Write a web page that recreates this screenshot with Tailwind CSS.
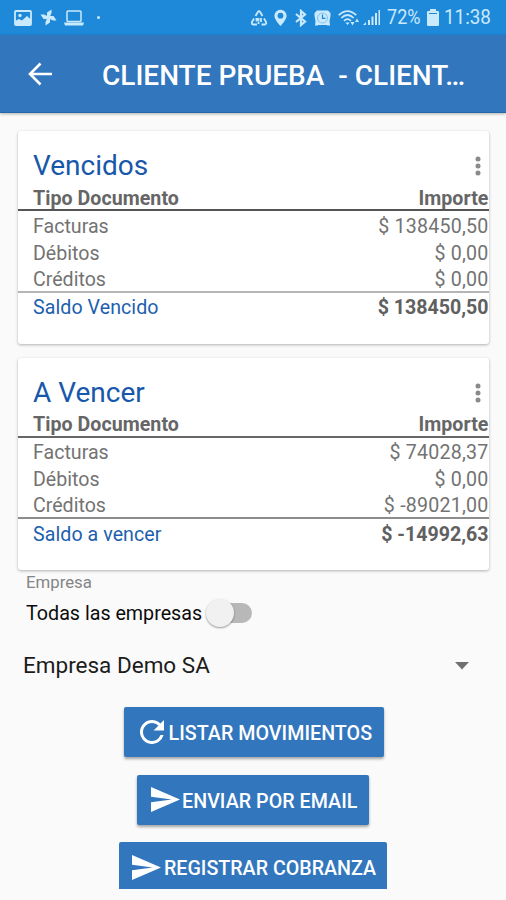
<!DOCTYPE html>
<html lang="es">
<head>
<meta charset="utf-8">
<title>Cliente</title>
<script src="https://cdn.jsdelivr.net/npm/@tailwindcss/browser@4"></script>
</head>
<body class="w-[506px] h-[900px] overflow-hidden bg-[#fafafa] font-[Roboto,sans-serif] text-[19.6px] text-[#737373]">
<div class="flex flex-col h-[900px]">
  <div class="h-[35px] bg-[#1e88d9] flex items-center justify-between text-[#c9eafc] pl-[14px] pr-[15px] shrink-0">
    <div class="flex items-center">
      <svg class="w-[18px] h-[16px]" viewBox="0 0 18 16"><rect x="1" y="1" width="16" height="14" rx="1" fill="none" stroke="currentColor" stroke-width="1.8"/><circle cx="6" cy="5.5" r="1.7" fill="currentColor"/><path d="M1 11l4-2 3 1.500 5-4.500 4 3.500V15H1z" fill="currentColor"/></svg>
      <svg class="w-[17px] h-[17px] ml-[8px]" viewBox="0 0 17 17" fill="currentColor"><path d="M7 8.500V3.500L11.500 .5V4L9.500 8.500z"/><path d="M7 8.500V3.500L11.500 .5V4L9.500 8.500z" transform="rotate(90 8.500 8.500)"/><path d="M7 8.500V3.500L11.500 .5V4L9.500 8.500z" transform="rotate(180 8.500 8.500)"/><path d="M7 8.500V3.500L11.500 .5V4L9.500 8.500z" transform="rotate(270 8.500 8.500)"/></svg>
      <svg class="w-[20px] h-[16px] ml-[7px]" viewBox="0 0 20 16"><rect x="3" y="1" width="14" height="10.500" rx="1" fill="none" stroke="currentColor" stroke-width="1.500"/><path d="M0 12.500h20l-1 3H1z" fill="currentColor"/></svg>
      <span class="w-[3px] h-[3px] rounded-full bg-[#c9eafc] ml-[13px]"></span>
    </div>
    <div class="flex items-center">
      <svg class="w-[18px] h-[16px]" viewBox="0 0 18 16" fill="none" stroke="currentColor" stroke-width="1.800"><path d="M5.500 6l2.300-4q1.200-1.500 2.400 0l2.300 4M14 8.500l2.200 3.800q.3 2-1.500 2.200H11.500M7 14.500H3.300q-1.800-.3-1.500-2.200L4 8.500M6.500 11.500v-2.500h2v2.500M11 8v4M8.500 12v2"/></svg>
      <svg class="w-[13px] h-[18px] ml-[6px]" viewBox="0 0 13 18"><path fill="currentColor" fill-rule="evenodd" d="M6.500 .8A6 6 0 0 0 .4 6.800C.4 11 6.500 17 6.500 17s6.100-6 6.100-10.200A6 6 0 0 0 6.500 .8zm0 3a2.900 2.900 0 1 1 0 5.800 2.900 2.900 0 0 1 0-5.800z"/></svg>
      <svg class="w-[12px] h-[18px] ml-[8px]" viewBox="0 0 12 18" fill="none" stroke="currentColor" stroke-width="2.200"><path d="M1 5l9 7.500-4 3.500V2l4 3.500L1 13"/></svg>
      <svg class="w-[17px] h-[18px] ml-[7px]" viewBox="0 0 17 18"><path d="M.5 4L3 1.500h11L16.500 4v3l-1 5 .5 4.500h-2.500L12.500 16h-8l-1 .5H1L1.500 12 .5 7z" fill="currentColor"/><circle cx="8.500" cy="9" r="5" fill="none" stroke="#6bb8ea" stroke-width=".8"/><path d="M8.500 5.500V9.300H11.500" fill="none" stroke="#1e88d9" stroke-width="1.300"/></svg>
      <svg class="w-[22px] h-[18px] ml-[7px]" viewBox="0 0 22 18" fill="none" stroke="currentColor" stroke-width="1.700"><path d="M.7 6.200Q9.500-2 18.300 6.200M3.300 9Q9.500 3 15.700 9M6 11.800Q9.500 8.500 13 11.800"/><path d="M7.500 13.500h4l-2 2.500z" fill="currentColor" stroke="none"/><path d="M12.500 13l2 3.500 2-3.500zM17 13l2-3.500 2 3.500z" fill="currentColor" stroke="none"/></svg>
      <svg class="w-[18px] h-[17px] ml-[3px]" viewBox="0 0 18 17" fill="currentColor"><path d="M0 16l3-3v3zM5 11h2v5H5zM8.500 7.500h2V16h-2zM12 4h2v12h-2zM15.500 1h1.500v15h-1.500z"/></svg>
      <span class="ml-[6px] w-[34px] text-[20.500px] inline-block origin-left scale-x-[0.88] whitespace-nowrap">72%</span>
      <svg class="w-[12px] h-[17px] ml-[6px]" viewBox="0 0 12 17" fill="currentColor"><path d="M3 0h6v2H11q1 0 1 1v13q0 1-1 1H1q-1 0-1-1V3q0-1 1-1h2z"/><path d="M2 4.500h8" stroke="#1e88d9" stroke-width="1"/></svg>
      <span class="ml-[5px] w-[47px] text-[20.500px] inline-block origin-left scale-x-[0.92] whitespace-nowrap">11:38</span>
    </div>
  </div>
  <header class="h-[78px] bg-[#3276bd] border-b border-[#2467a6] shadow-[0_1px_3px_rgba(0,0,0,0.3)] flex items-center text-white shrink-0">
    <svg class="w-[24px] h-[24px] ml-[28px]" viewBox="0 0 24 24" fill="none" stroke="currentColor" stroke-width="2.600"><path d="M12.500 1.500L2 12l10.500 10.500M2 12h22"/></svg>
    <h1 class="ml-[50px] pt-[4px] text-[28px] font-medium whitespace-pre">CLIENTE PRUEBA  - CLIENT…</h1>
  </header>
  <main class="flex flex-col">
    <section class="mt-[18px] ml-[18px] w-[471px] h-[213px] pr-[0.500px] bg-white rounded-[3px] shadow-[0_1px_3px_rgba(0,0,0,0.300)]">
      <div class="pt-[17px] pl-[15px] pr-[8px] flex items-center justify-between h-[53px]"><h2 class="text-[28px] leading-[36px] text-[#1758ab]">Vencidos</h2>
        <svg class="w-[6px] h-[20px]" viewBox="0 0 6 20" fill="#8a8a8a"><circle cx="3" cy="3" r="2.500"/><circle cx="3" cy="10" r="2.500"/><circle cx="3" cy="17" r="2.500"/></svg></div>
      <div class="h-[27px] pl-[15px] flex justify-between leading-[29px] tracking-[0.050px] font-bold text-[#666] border-b-2 border-[#555]"><span>Tipo Documento</span><span>Importe</span></div>
      <div class="h-[82px] pt-[3px] pl-[15px] leading-[26.700px] border-b-2 border-[#b5b5b5]">
        <div class="flex justify-between"><span>Facturas</span><span class="tracking-[0.220px]">$ 138450,50</span></div>
        <div class="flex justify-between"><span>Débitos</span><span class="tracking-[0.220px]">$ 0,00</span></div>
        <div class="flex justify-between"><span>Créditos</span><span class="tracking-[0.220px]">$ 0,00</span></div>
      </div>
      <div class="pl-[15px] pt-[1px] flex justify-between leading-[28px]"><span class="text-[#1d5fae] tracking-[0.070px]">Saldo Vencido</span><span class="font-bold text-[#606060]">$ 138450,50</span></div>
    </section>
    <section class="mt-[14px] ml-[18px] w-[471px] h-[212px] pr-[0.500px] bg-white rounded-[3px] shadow-[0_1px_3px_rgba(0,0,0,0.300)]">
      <div class="pt-[17px] pl-[15px] pr-[8px] flex items-center justify-between h-[53px]"><h2 class="text-[28px] leading-[36px] text-[#1758ab]">A Vencer</h2>
        <svg class="w-[6px] h-[20px]" viewBox="0 0 6 20" fill="#8a8a8a"><circle cx="3" cy="3" r="2.500"/><circle cx="3" cy="10" r="2.500"/><circle cx="3" cy="17" r="2.500"/></svg></div>
      <div class="h-[27px] pl-[15px] flex justify-between leading-[28px] tracking-[0.050px] font-bold text-[#666] border-b-2 border-[#666]"><span>Tipo Documento</span><span>Importe</span></div>
      <div class="h-[81px] pt-[2px] pl-[15px] leading-[26.700px] border-b-2 border-[#8d8d8d]">
        <div class="flex justify-between"><span>Facturas</span><span class="tracking-[0.220px]">$ 74028,37</span></div>
        <div class="flex justify-between"><span>Débitos</span><span class="tracking-[0.220px]">$ 0,00</span></div>
        <div class="flex justify-between"><span>Créditos</span><span class="tracking-[0.220px]">$ -89021,00</span></div>
      </div>
      <div class="pl-[15px] pt-[1px] flex justify-between leading-[29px]"><span class="text-[#1d5fae] tracking-[0.070px]">Saldo a vencer</span><span class="font-bold text-[#606060]">$ -14992,63</span></div>
    </section>
    <div class="pl-[26px] text-[16.800px] leading-[24px] h-[24px] text-[#858585]">Empresa</div>
    <div class="pl-[26px] h-[38px] flex items-center text-[#0c0c0c] text-[19.700px]"><span class="w-[180px] pt-[2px] whitespace-nowrap">Todas las empresas</span>
      <div class="relative w-[46px] h-[30px] flex items-center justify-end"><div class="w-[36px] h-[20px] rounded-full bg-[#b8b8b8]"></div><div class="absolute left-0 top-[1px] w-[28px] h-[28px] rounded-full bg-[#f1f1f1] shadow-[0_1px_2px_rgba(0,0,0,0.400)]"></div></div>
    </div>
    <div class="mt-[14px] pl-[23px] pr-[37px] h-[40px] flex items-center justify-between text-[#1c1c1c] text-[22.500px]"><span>Empresa Demo SA</span>
      <svg class="w-[14px] h-[8px]" viewBox="0 0 14 8" fill="#707070"><path d="M0 0h14L7 7.500z"/></svg></div>
    <div class="mt-[21px] flex flex-col items-center gap-[17.500px] text-white font-medium text-[19.650px]">
      <button class="w-[260px] h-[50px] ml-px bg-[#3276bd] rounded-[2px] shadow-[0_2px_3px_rgba(0,0,0,0.350)] flex items-center pl-[16px]"><svg class="w-[24px] h-[24px]" viewBox="4 4 16 16" fill="white"><path d="M17.650 6.350A7.960 7.960 0 0 0 12 4a8 8 0 1 0 7.730 10h-2.080A6 6 0 1 1 12 6c1.660 0 3.140.69 4.220 1.780L13 11h7V4z"/></svg><span class="ml-[5px] pt-[4px] whitespace-nowrap tracking-[0.050px]">LISTAR MOVIMIENTOS</span></button>
      <button class="w-[232px] h-[50px] bg-[#3276bd] rounded-[2px] shadow-[0_2px_3px_rgba(0,0,0,0.350)] flex items-center pl-[14px]"><svg class="w-[29px] h-[25px]" viewBox="2 3 21 18" preserveAspectRatio="none" fill="white"><path d="M2.010 21L23 12 2.010 3 2 10l15 2-15 2z"/></svg><span class="ml-[2px] pt-[4px] whitespace-nowrap tracking-[0.050px]">ENVIAR POR EMAIL</span></button>
      <button class="w-[268px] h-[47px] bg-[#3276bd] rounded-t-[2px] flex items-center pl-[13px] pt-[4px]"><svg class="w-[29px] h-[25px]" viewBox="2 3 21 18" preserveAspectRatio="none" fill="white"><path d="M2.010 21L23 12 2.010 3 2 10l15 2-15 2z"/></svg><span class="ml-[3px] pt-[3px] whitespace-nowrap">REGISTRAR COBRANZA</span></button>
    </div>
  </main>
</div>
</body>
</html>
